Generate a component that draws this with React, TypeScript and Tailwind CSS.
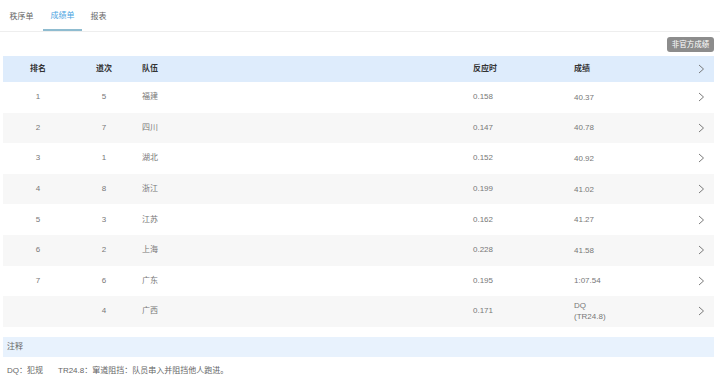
const rows = [
  { rank: '1', lane: '5', team: '福建', rt: '0.158', res: ['40.37'] },
  { rank: '2', lane: '7', team: '四川', rt: '0.147', res: ['40.78'] },
  { rank: '3', lane: '1', team: '湖北', rt: '0.152', res: ['40.92'] },
  { rank: '4', lane: '8', team: '浙江', rt: '0.199', res: ['41.02'] },
  { rank: '5', lane: '3', team: '江苏', rt: '0.162', res: ['41.27'] },
  { rank: '6', lane: '2', team: '上海', rt: '0.228', res: ['41.58'] },
  { rank: '7', lane: '6', team: '广东', rt: '0.195', res: ['1:07.54'] },
  { rank: '', lane: '4', team: '广西', rt: '0.171', res: ['DQ', '(TR24.8)'] },
]

const cols = 'grid grid-cols-[70px_62px_331px_101px_121px_1fr] items-center'

function Chevron() {
  return (
    <svg width="7" height="10" viewBox="0 0 7 10" className="text-[#6b6b6b]">
      <polyline points="1,1 5.5,5 1,9" fill="none" stroke="currentColor" strokeWidth="0.9" />
    </svg>
  )
}

export default function App() {
  return (
    <div
      className="w-[720px] h-[381px] overflow-hidden bg-white text-[8px] text-[#777]"
      style={{ fontFamily: '"Liberation Sans", "Noto Sans CJK SC", sans-serif' }}
    >
      <div className="flex h-[32px] border-b border-[#eeeeee]">
        <div className="w-[43px] flex items-center justify-center pt-[3px] text-[#666]">秩序单</div>
        <div className="w-[39px] flex items-center justify-center pt-[3px] text-[#4aa3df] border-b-2 border-[#8fbcd0]">成绩单</div>
        <div className="w-[33px] flex items-center justify-center pt-[3px] text-[#666]">报表</div>
      </div>

      <div className="px-[3px] pr-[6px]">
        <div className="flex justify-end pt-[5px] pb-[4px]">
          <div className="h-[15px] w-[47px] rounded-[3px] bg-[#8c8c8c] text-white text-[7.5px] flex items-center justify-center">
            非官方成绩
          </div>
        </div>

        <div className={`${cols} h-[26px] bg-[#deecfc] text-[#333] font-bold`}>
          <div className="text-center">排名</div>
          <div className="text-center">道次</div>
          <div className="pl-[7px]">队伍</div>
          <div className="pl-[7px]">反应时</div>
          <div className="pl-[7px]">成绩</div>
          <div className="flex justify-center pl-[1px]">
            <Chevron />
          </div>
        </div>

        {rows.map((r, i) => (
          <div
            key={r.team}
            className={`${cols} h-[30.6px] ${i % 2 === 1 ? 'bg-[#f7f7f7]' : 'bg-white'}`}
          >
            <div className="text-center">{r.rank}</div>
            <div className="text-center">{r.lane}</div>
            <div className="pl-[7px]">{r.team}</div>
            <div className="pl-[7px]">{r.rt}</div>
            <div className="pl-[7px] leading-[11px]">
              {r.res.map((t) => (
                <div key={t}>{t}</div>
              ))}
            </div>
            <div className="flex justify-center pl-[1px]">
              <Chevron />
            </div>
          </div>
        ))}

        <div className="mt-[10px] h-[20px] bg-[#e8f2fd] flex items-center pl-[4px] text-[#666]">注释</div>
        <div className="flex items-center h-[28px] pl-[4px] gap-[15px] text-[#666]">
          <span>DQ：犯规</span>
          <span>TR24.8：窜道阻挡：队员串入并阻挡他人跑进。</span>
        </div>
      </div>
    </div>
  )
}
